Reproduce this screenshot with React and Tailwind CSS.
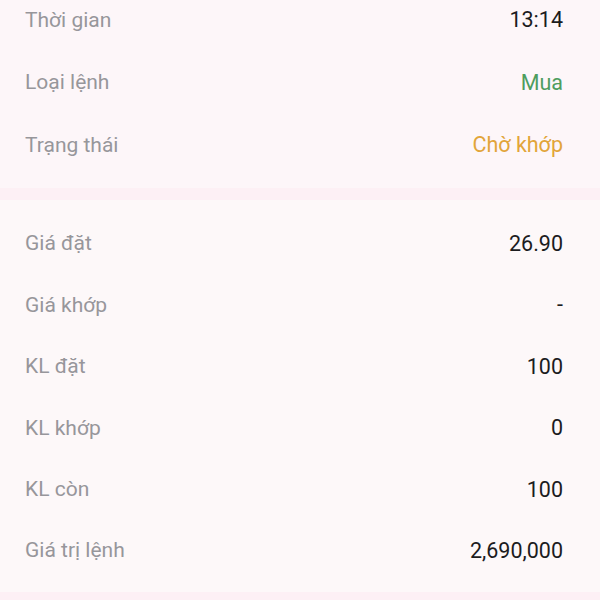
import React from 'react'

const topRows = [
  { label: 'Thời gian', value: '13:14', color: 'text-[#1c1c1e]' },
  { label: 'Loại lệnh', value: 'Mua', color: 'text-[#4e9d5e]' },
  { label: 'Trạng thái', value: 'Chờ khớp', color: 'text-[#e2a53a]' },
]

const detailRows = [
  { label: 'Giá đặt', value: '26.90' },
  { label: 'Giá khớp', value: '-' },
  { label: 'KL đặt', value: '100' },
  { label: 'KL khớp', value: '0' },
  { label: 'KL còn', value: '100' },
  { label: 'Giá trị lệnh', value: '2,690,000' },
]

function Row({ label, value, color = 'text-[#1c1c1e]', h }) {
  return (
    <div className={`flex items-center justify-between ${h}`}>
      <span className="text-[#97969b]">{label}</span>
      <span className={`text-[21.5px] ${color}`}>{value}</span>
    </div>
  )
}

export default function App() {
  return (
    <div
      className="w-[600px] h-[600px] overflow-hidden bg-[#fdf0f5] text-[21px] antialiased"
      style={{ fontFamily: 'Roboto, "Noto Sans", sans-serif' }}
    >
      {/* order status */}
      <div className="bg-[#fdf6f9] pl-[25px] pr-[37px] mt-[-11px] pb-[11.5px]">
        {topRows.map((r) => (
          <Row key={r.label} {...r} h="h-[62.5px]" />
        ))}
      </div>

      {/* spacer band */}
      <div className="h-[12px]" />

      {/* price / volume details */}
      <div className="bg-[#fdf8f9] pl-[25px] pr-[37px] pt-[13.5px] pb-[10px]">
        {detailRows.map((r) => (
          <Row key={r.label} {...r} h="h-[61.4px]" />
        ))}
      </div>
    </div>
  )
}
